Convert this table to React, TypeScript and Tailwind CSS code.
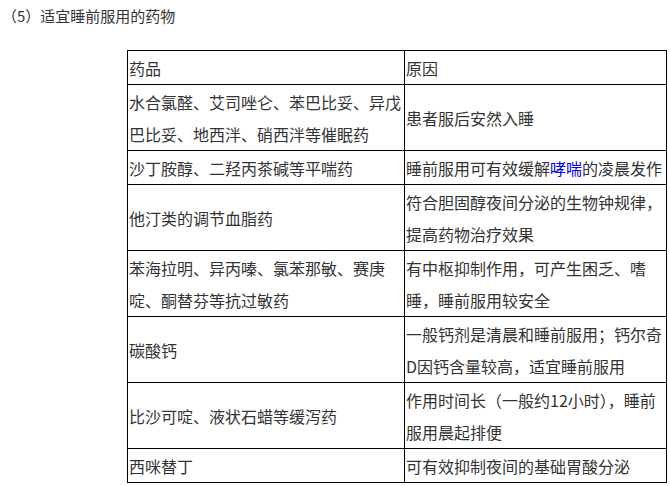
const rows: { drug: string; reason: React.ReactNode }[] = [
  { drug: "水合氯醛、艾司唑仑、苯巴比妥、异戊巴比妥、地西泮、硝西泮等催眠药", reason: "患者服后安然入睡" },
  {
    drug: "沙丁胺醇、二羟丙茶碱等平喘药",
    reason: (
      <>
        睡前服用可有效缓解<span className="text-[#0000ff]">哮喘</span>的凌晨发作
      </>
    ),
  },
  { drug: "他汀类的调节血脂药", reason: "符合胆固醇夜间分泌的生物钟规律，提高药物治疗效果" },
  { drug: "苯海拉明、异丙嗪、氯苯那敏、赛庚啶、酮替芬等抗过敏药", reason: "有中枢抑制作用，可产生困乏、嗜睡，睡前服用较安全" },
  { drug: "碳酸钙", reason: "一般钙剂是清晨和睡前服用；钙尔奇D因钙含量较高，适宜睡前服用" },
  { drug: "比沙可啶、液状石蜡等缓泻药", reason: "作用时间长（一般约12小时），睡前服用晨起排便" },
  { drug: "西咪替丁", reason: "可有效抑制夜间的基础胃酸分泌" },
]

export default function App() {
  return (
    <div className="w-[670px] h-[486px] bg-white text-[#333333] font-['Noto_Sans_CJK_SC','Noto_Sans',sans-serif] overflow-hidden">
      <div className="pt-[6px] pl-[2px] text-[15px] leading-[20px]">（5）适宜睡前服用的药物</div>
      <table className="ml-[127px] mt-[24px] w-[539px] table-fixed border-collapse text-[16px] leading-[32px]">
        <colgroup>
          <col className="w-[277px]" />
          <col className="w-[262px]" />
        </colgroup>
        <tbody>
          <tr>
            <td className="border border-black px-px py-[0.5px] align-middle">药品</td>
            <td className="border border-black px-px py-[0.5px] align-middle">原因</td>
          </tr>
          {rows.map((r, i) => (
            <tr key={i}>
              <td className="border border-black px-px py-[0.5px] align-middle break-all">{r.drug}</td>
              <td className="border border-black px-px py-[0.5px] align-middle break-all">{r.reason}</td>
            </tr>
          ))}
        </tbody>
      </table>
    </div>
  )
}
